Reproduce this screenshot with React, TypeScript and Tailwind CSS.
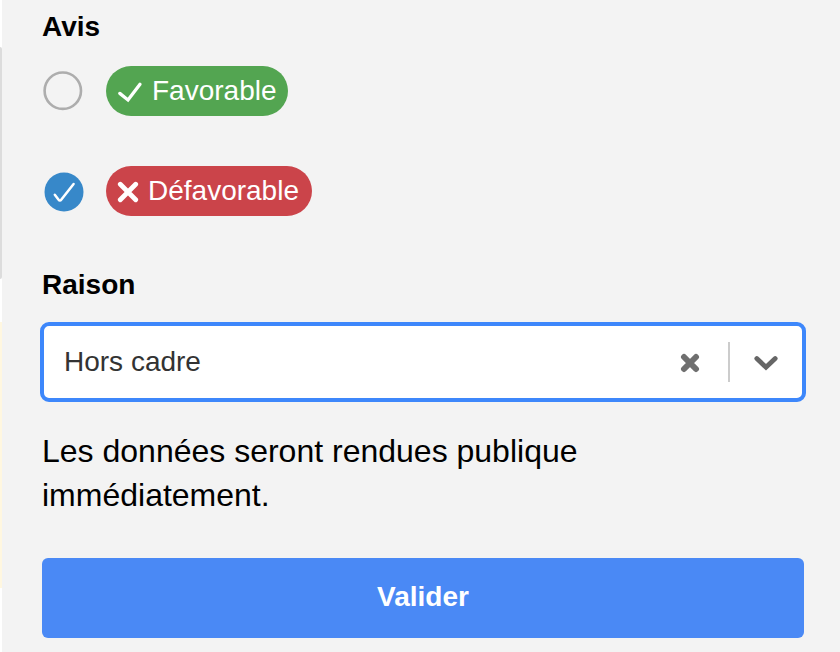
function CheckIcon() {
  return (
    <svg className="mt-[3px] h-6 w-[26px] shrink-0" viewBox="0 0 26 24" fill="none">
      <path
        d="M2.8 12.4 11 19 23 3.2"
        stroke="currentColor"
        strokeWidth="3.3"
        strokeLinecap="round"
      />
    </svg>
  );
}

function CrossIcon() {
  return (
    <svg className="mt-[2px] size-[22px] shrink-0" viewBox="0 0 22 22" fill="none">
      <path
        d="M3.3 3.3 18.7 18.7M18.7 3.3 3.3 18.7"
        stroke="currentColor"
        strokeWidth="4.8"
        strokeLinecap="round"
      />
    </svg>
  );
}

function Radio({ checked = false }: { checked?: boolean }) {
  return (
    <svg className="size-[42px] shrink-0" viewBox="0 0 42 42" fill="none">
      {checked ? (
        <>
          <circle cx="22" cy="22" r="19.5" fill="#3788c9" />
          <path
            d="M12.8 24.8 16.4 29.6Q17.9 31.6 19.4 29.6L31.6 14"
            stroke="white"
            strokeWidth="2.5"
            strokeLinecap="round"
            strokeLinejoin="round"
          />
        </>
      ) : (
        <circle cx="20.8" cy="20.7" r="18.2" stroke="#adadad" strokeWidth="2.6" />
      )}
    </svg>
  );
}

function AvisField() {
  return (
    <fieldset>
      <legend className="h-[66px] pt-[11px] text-[28px] leading-8 font-bold">
        Avis
      </legend>
      <label className="flex h-[50px] items-center">
        <span className="flex w-16 shrink-0">
          <Radio />
        </span>
        <span className="flex h-[50px] w-[182px] items-center rounded-full bg-[#53a551] pl-[11px] text-[28px] leading-8 text-white">
          <CheckIcon />
          <span className="ml-[9px]">Favorable</span>
        </span>
      </label>
      <label className="mt-[50px] flex h-[50px] items-center">
        <span className="flex w-16 shrink-0">
          <Radio checked />
        </span>
        <span className="flex h-[50px] w-[206px] items-center rounded-full bg-[#cb444a] pl-[11px] text-[28px] leading-8 text-white">
          <CrossIcon />
          <span className="ml-[9px]">Défavorable</span>
        </span>
      </label>
    </fieldset>
  );
}

function RaisonSelect() {
  return (
    <div className="-mx-[2px] flex h-20 items-center rounded-[9px] border-4 border-[#3d87fb] bg-white">
      <span className="flex-1 pl-5 text-[28px] leading-8 text-[#333]">
        Hors cadre
      </span>
      <svg className="mt-[2px] size-5 text-[#6f6f6f]" viewBox="0 0 20 20" fill="none">
        <path
          d="M4 4 16 16M16 4 4 16"
          stroke="currentColor"
          strokeWidth="6"
          strokeLinecap="round"
        />
      </svg>
      <span className="ml-7 h-10 w-[2px] bg-[#ccc]" />
      <svg
        className="mr-6 ml-6 h-5 w-6 text-[#666]"
        viewBox="0 0 24 20"
        fill="none"
      >
        <path
          d="M2.8 6.6 12 15.3 21.2 6.6"
          stroke="currentColor"
          strokeWidth="4.8"
          strokeLinecap="round"
        />
      </svg>
    </div>
  );
}

export default function App() {
  return (
    <div className="flex h-[652px] w-[840px] overflow-hidden bg-[#f3f3f3] font-['Liberation_Sans',Arial,sans-serif] text-black">
      <div className="w-[2px] shrink-0 bg-white">
        <div className="mt-[47px] h-[232px] rounded-r-[2px] bg-[#dcdcdc]" />
        <div className="mt-[43px] h-[266px] bg-[#fff7e0]" />
      </div>

      <main className="flex-1 pr-9 pl-10">
        <AvisField />
        <h2 className="mt-[53px] h-[53px] text-[28px] leading-8 font-bold">
          Raison
        </h2>
        <RaisonSelect />
        <p className="mt-[27px] text-[32px] leading-11">
          Les données seront rendues publique immédiatement.
        </p>
        <button
          type="button"
          className="mt-[41px] h-20 w-full rounded-md bg-[#4a89f5] pb-[2px] text-[28px] font-bold text-white"
        >
          Valider
        </button>
      </main>
    </div>
  );
}
